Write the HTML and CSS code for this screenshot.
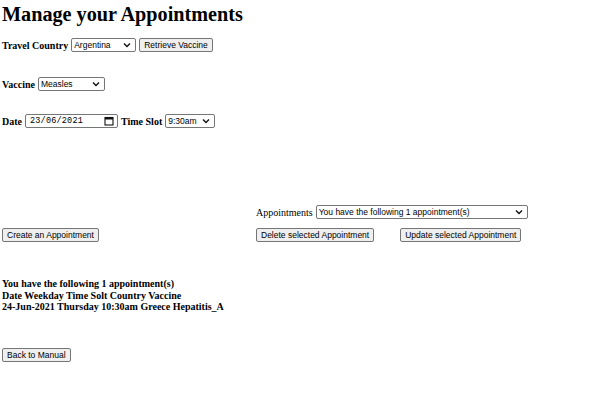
FILE: index.html
```html
<!DOCTYPE html>
<html>
<head>
<meta charset="utf-8">
<link rel="stylesheet" href="styles.css">
</head>
<body>
<h1 class="title">Manage your Appointments</h1>
<div class="row row-country">
  <label class="lbl">Travel Country</label>
  <select class="ctl sel-country"><option>Argentina</option></select>
  <button class="btn">Retrieve Vaccine</button>
</div>
<div class="row row-vaccine">
  <label class="lbl">Vaccine</label>
  <select class="ctl sel-vaccine"><option>Measles</option></select>
</div>
<div class="row row-date">
  <label class="lbl">Date</label>
  <div class="ctl date-input"><span class="date-text">23/06/2021</span>
    <svg class="cal" width="10" height="10" viewBox="0 0 10 10"><rect x="1" y="1.5" width="8" height="7.5" fill="none" stroke="#111" stroke-width="1.1"/><rect x="1" y="1.5" width="8" height="2" fill="#111"/></svg>
  </div>
  <label class="lbl">Time Slot</label>
  <select class="ctl sel-time"><option>9:30am</option></select>
</div>
<div class="appt-grid">
  <div></div>
  <div class="row appt-row">
    <label class="lbl-plain">Appointments</label>
    <select class="ctl sel-appt"><option>You have the following 1 appointment(s)</option></select>
  </div>
  <div class="cell"><button class="btn">Create an Appointment</button></div>
  <div class="cell actions">
    <button class="btn">Delete selected Appointment</button>
    <button class="btn">Update selected Appointment</button>
  </div>
</div>
<div class="summary">
  <div>You have the following 1 appointment(s)</div>
  <div>Date Weekday Time Solt Country Vaccine</div>
  <div>24-Jun-2021 Thursday 10:30am Greece Hepatitis_A</div>
</div>
<div class="back"><button class="btn">Back to Manual</button></div>
</body>
</html>
```
FILE: styles.css
```css
html, body {
  margin: 0;
  padding: 0;
  background: #fff;
}
body {
  padding: 0 2px;
  font-family: "Liberation Serif", "Times New Roman", serif;
  font-size: 10px;
  color: #000;
}
.title {
  font-size: 20.2px;
  font-weight: bold;
  margin: 2px 0 0 0;
  line-height: 24px;
}
.row {
  display: flex;
  align-items: center;
  height: 14px;
}
.row-country { margin-top: 12px; }
.row-vaccine { margin-top: 25px; }
.row-date { margin-top: 23px; }
.lbl {
  font-weight: bold;
  margin-right: 3px;
}
.lbl-plain {
  margin-right: 3px;
}
.ctl, .btn {
  font-family: "Liberation Sans", Arial, sans-serif;
  font-size: 8.5px;
  box-sizing: border-box;
  height: 14px;
  color: #000;
}
select.ctl {
  appearance: none;
  -webkit-appearance: none;
  border: 1px solid #767676;
  border-radius: 2px;
  background: #fff url("data:image/svg+xml;utf8,<svg xmlns='http://www.w3.org/2000/svg' width='8' height='6' viewBox='0 0 8 6'><path d='M1 1.5 L4 4.5 L7 1.5' fill='none' stroke='%23111' stroke-width='1.4'/></svg>") no-repeat right 4px center;
  padding: 0 14px 0 2px;
  line-height: 12px;
}
.sel-country { width: 65px; }
.sel-vaccine { width: 67px; }
.sel-time { width: 50px; }
.sel-appt { width: 212px; }
.btn {
  background: #efefef;
  border: 1px solid #767676;
  border-radius: 2px;
  padding: 0 4px;
  margin-left: 3px;
  line-height: 12px;
}
.date-input {
  width: 93px;
  border: 1px solid #767676;
  border-radius: 2px;
  display: flex;
  align-items: center;
  justify-content: space-between;
  padding: 0 3px 0 4px;
  margin-right: 3px;
  background: #fff;
}
.date-text {
  font-family: "Liberation Mono", "DejaVu Sans Mono", monospace;
  font-size: 8.5px;
  letter-spacing: 0.2px;
}
.cal { display: block; }
.appt-grid {
  display: grid;
  grid-template-columns: 254px auto;
  grid-template-rows: 14px 14px;
  row-gap: 9px;
  margin-top: 77px;
}
.cell { display: flex; align-items: center; }
.cell .btn { margin-left: 0; }
.actions { gap: 26px; }
.summary {
  margin-top: 36px;
  font-weight: bold;
  line-height: 11.5px;
}
.back {
  margin-top: 35px;
}
.back .btn { margin-left: 0; }
```
